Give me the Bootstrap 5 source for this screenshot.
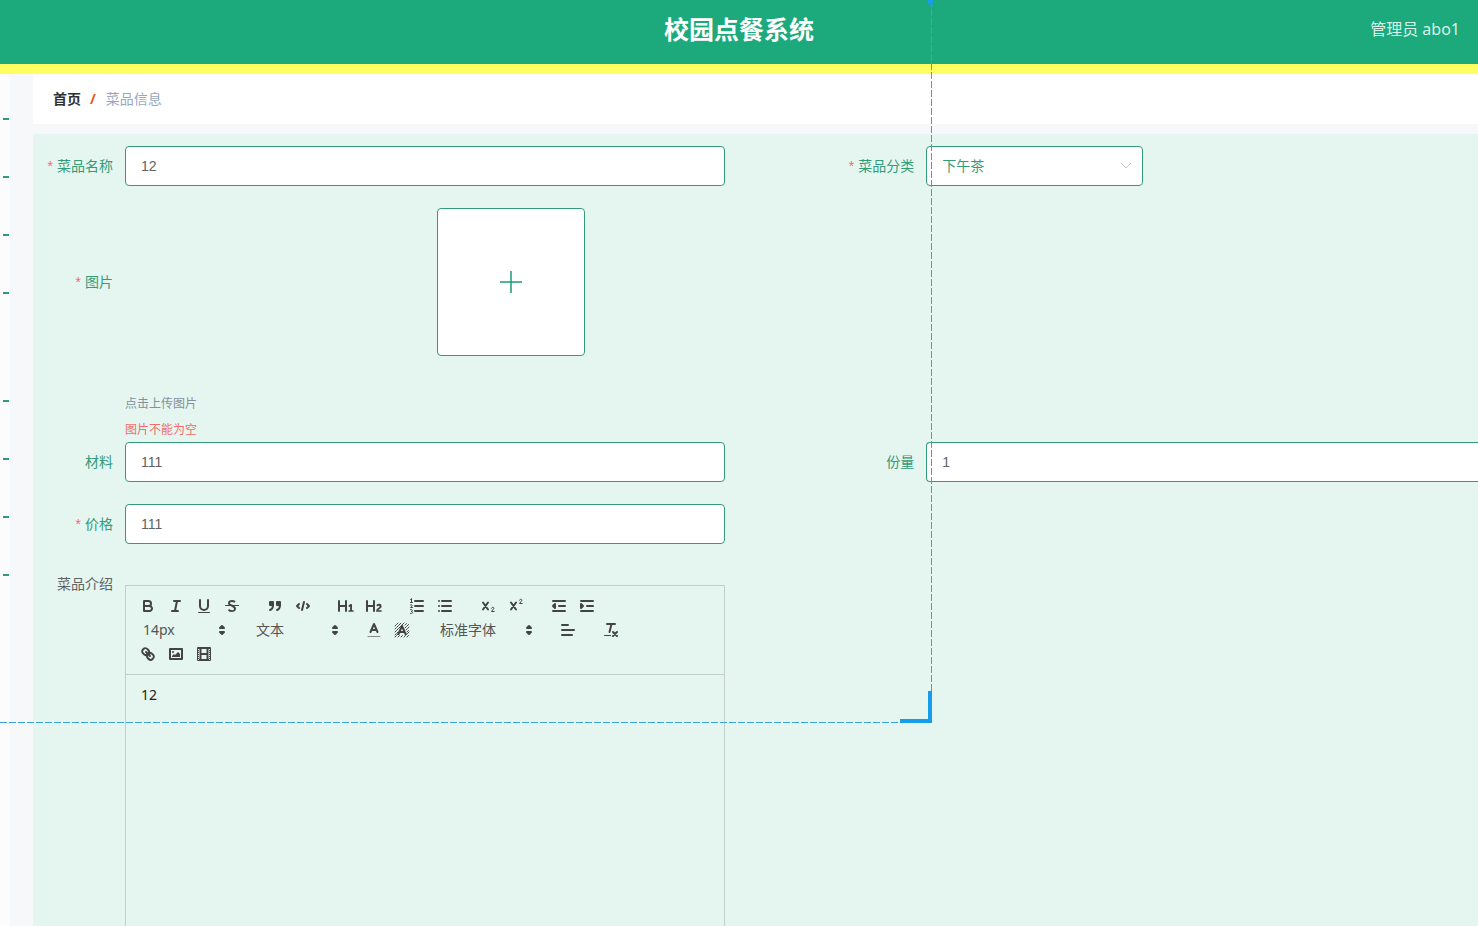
<!DOCTYPE html>
<html lang="zh-CN">
<head>
<meta charset="utf-8">
<meta name="viewport" content="width=device-width, initial-scale=1">
<title>校园点餐系统</title>
<link href="https://cdn.jsdelivr.net/npm/bootstrap@5.3.0/dist/css/bootstrap.min.css" rel="stylesheet">
<style>
:root{--brand:#1ca97b;--line:#349b79;--mint:#e4f6ef;--ink:#444}
body{font:14px/20px "Noto Sans","Noto Sans CJK SC",sans-serif;color:#606266;background:#f6f8fa}
.topbar{height:74px;padding-bottom:6px;background:var(--brand);border-bottom:10px solid #ffff62}
.brand-title{font-size:25px;line-height:36px;font-weight:700;color:#fff}
.account{right:18px;top:19px;font-size:16px;color:#d9f2e9}
.rail{width:10px;background:#fcfcfc;padding-top:16px}
.rail a{display:flex;align-items:center;height:58px;padding-left:3px}
.rail a::after{content:"";width:6px;height:2px;background:var(--line)}
.rail .rail-gap{margin-top:50px}
.content-area{margin-left:23px}
.crumbs{height:50px;padding:0 20px;background:#fff;margin-bottom:10px}
.crumbs a{color:#303133;font-weight:700}
.crumbs .sep{color:#e8562b;font-weight:700;margin:0 10px 0 9px}
.crumbs .here{color:#97a8be}
.dish-form{background:var(--mint);padding-top:12px}
.form-line{display:grid;grid-template-columns:minmax(0,56fr) minmax(0,45fr);margin-bottom:22px}
.tag{flex:0 0 92px;padding-right:12px;text-align:right;line-height:40px;color:var(--line)}
.tag.need::before{content:"*";font-family:"Liberation Sans",sans-serif;color:#f56c6c;margin-right:4px}
.tag-plain{line-height:36px;color:#606266}
.box{height:40px;border:1px solid var(--line);border-radius:4px;padding:0 15px;font-family:"Liberation Sans","Noto Sans CJK SC",sans-serif;font-size:14px;color:#606266;background-color:#fff}
.box-wide{flex:1 1 0;max-width:600px;min-width:0}
.box-cut{flex:1 1 0;min-width:0;border-right:0;border-radius:4px 0 0 4px}
.box-pick{width:217px;appearance:none;color:var(--line);background:#fff url("data:image/svg+xml,%3Csvg xmlns='http://www.w3.org/2000/svg' width='12' height='8' fill='none' stroke='%23c0c4cc'%3E%3Cpath d='M1 1l5 5 5-5'/%3E%3C/svg%3E") no-repeat right 10px center}
.upload-line{margin-bottom:34px}
.upload{width:148px;height:148px;margin-left:312px;border:1px solid var(--line);border-radius:4px;background:#fff}
.hint{font-size:12px;margin-left:92px}
.hint .tip{color:#838fa0;line-height:28px}
.hint .err{color:#f56c6c;line-height:24px}
.editor{flex:1 1 0;max-width:600px;margin-top:19px;border:1px solid #c0cfca}
.tools{padding:8px;border-bottom:1px solid #c0cfca}
.tools .set{display:flex;margin-right:15px}
.tools button{width:28px;height:24px;padding:3px 5px;border:0;background:none;display:block}
.tools svg{display:block;width:18px;height:18px;fill:none;stroke:var(--ink);stroke-width:2;stroke-linecap:round;stroke-linejoin:round}
.tools .f{fill:var(--ink);stroke:none}
.tools .s{fill:var(--ink)}
.tools .t{stroke-width:1}
.tools select{width:98px;height:24px;padding:0 18px 0 9px;border:0;appearance:none;font-size:14px;line-height:20px;color:#555;background:url("data:image/svg+xml,%3Csvg xmlns='http://www.w3.org/2000/svg' viewBox='0 0 18 18' width='18' height='18' fill='%23444' stroke='%23444' stroke-width='2' stroke-linejoin='round'%3E%3Cpath d='M7 11l2 2 2-2zM7 7l2-2 2 2z'/%3E%3C/svg%3E") no-repeat right 1px center}
.tools .fontpick{width:108px}
.entry{display:block;width:100%;height:500px;border:0;padding:10px 15px;background:transparent;color:#222;font-size:14px;line-height:20px;resize:none}
.capture{left:0;top:0;width:932px;height:723px;pointer-events:none;z-index:5;
background:repeating-linear-gradient(to bottom,#35a5dc 0 7px,transparent 7px 9px) right top/1px 100% no-repeat,repeating-linear-gradient(to right,#35a5dc 0 7px,transparent 7px 9px) left bottom/100% 1px no-repeat}
.capture::before{content:"";position:absolute;right:0;bottom:0;width:32px;height:32px;border:solid #159ceb;border-width:0 4px 4px 0}
.capture::after{content:"";position:absolute;right:-1px;top:0;width:5px;height:5px;background:#159ceb;border-radius:0 0 3px 3px}
</style>
</head>
<body>
<div class="vh-100 d-flex flex-column overflow-hidden position-relative">
<header class="topbar d-flex align-items-center justify-content-center position-relative flex-shrink-0">
<h1 class="brand-title m-0">校园点餐系统</h1>
<span class="account position-absolute">管理员 abo1</span>
</header>
<div class="d-flex flex-grow-1 overflow-hidden">
<nav class="rail flex-shrink-0" aria-label="菜单">
<a href="#"></a><a href="#"></a><a href="#"></a><a href="#"></a><a href="#" class="rail-gap"></a><a href="#"></a><a href="#"></a><a href="#"></a>
</nav>
<main class="content-area flex-grow-1">
<nav class="crumbs d-flex align-items-center"><a href="#" class="text-decoration-none">首页</a><span class="sep">/</span><span class="here">菜品信息</span></nav>
<form class="dish-form">
<div class="form-line">
<div class="d-flex"><label class="tag need" for="name">菜品名称</label><input class="box box-wide" id="name" value="12"></div>
<div class="d-flex"><label class="tag need" for="kind">菜品分类</label><select class="box box-pick" id="kind"><option>下午茶</option></select></div>
</div>
<div class="upload-line d-flex align-items-center"><span class="tag need">图片</span>
<button type="button" class="upload d-flex align-items-center justify-content-center p-0" aria-label="上传"><svg width="24" height="24" stroke="#1c9c75" stroke-width="1.5"><path d="M1 12h22M12 1v22"/></svg></button></div>
<div class="hint"><div class="tip">点击上传图片</div><div class="err">图片不能为空</div></div>
<div class="form-line">
<div class="d-flex"><label class="tag" for="stuff">材料</label><input class="box box-wide" id="stuff" value="111"></div>
<div class="d-flex"><label class="tag" for="amount">份量</label><input class="box box-cut" id="amount" value="1"></div>
</div>
<div class="form-line">
<div class="d-flex"><label class="tag need" for="price">价格</label><input class="box box-wide" id="price" value="111"></div>
</div>
<div class="d-flex"><label class="tag tag-plain" for="intro">菜品介绍</label>
<div class="editor">
<div class="tools d-flex flex-wrap">
<div class="set">
<button type="button" aria-label="粗体"><svg viewBox="0 0 18 18"><path d="M5,4H9.5A2.5,2.5,0,0,1,12,6.5v0A2.5,2.5,0,0,1,9.5,9H5A0,0,0,0,1,5,9V4Z"/><path d="M5,9h5.5A2.5,2.5,0,0,1,13,11.5v0A2.5,2.5,0,0,1,10.500,14H5V9Z"/></svg></button>
<button type="button" aria-label="斜体"><svg viewBox="0 0 18 18"><path d="M7 4h6M5 14h6M8 14l2-10"/></svg></button>
<button type="button" aria-label="下划线"><svg viewBox="0 0 18 18"><path d="M5,3V9a4.012,4.012,0,0,0,4,4H9a4.012,4.012,0,0,0,4-4V3"/><rect class="f" height="1" rx=".5" width="12" x="3" y="15"/></svg></button>
<button type="button" aria-label="删除线"><svg viewBox="0 0 18 18"><path class="t" d="M2.500 8.500h13"/><path class="f" d="M6.753,8.663A2.800,2.800,0,0,1,5,6C5,4.200,6.600,3,9,3a5.900,5.900,0,0,1,3.500,1.100L11.600,5.700A4.500,4.500,0,0,0,9,4.900c-1.300,0-2,.5-2,1.200,0,.8.700,1.300,3.400,1.900z"/><path class="f" d="M11.500,9A3,3,0,0,1,13,11.800C13,13.700,11.400,15,8.900,15A6.300,6.300,0,0,1,5,13.700l.9-1.600A5,5,0,0,0,8.900,13.200c1.300,0,2.100-.5,2.100-1.300C11,11,10.300,10.400,7.500,9z"/></svg></button>
</div>
<div class="set">
<button type="button" aria-label="引用"><svg viewBox="0 0 18 18"><rect class="s" height="3" width="3" x="4" y="5"/><rect class="s" height="3" width="3" x="11" y="5"/><path d="M7,8c0,4.031-3,5-3,5"/><path d="M14,8c0,4.031-3,5-3,5"/></svg></button>
<button type="button" aria-label="代码"><svg viewBox="0 0 18 18"><path d="M5 7L3 9l2 2M13 7l2 2-2 2M10 5L8 13"/></svg></button>
</div>
<div class="set">
<button type="button" aria-label="标题一"><svg viewBox="0 0 18 18"><path class="f" d="M10,4V14a1,1,0,0,1-2,0V10H3v4a1,1,0,0,1-2,0V4A1,1,0,0,1,3,4V8H8V4a1,1,0,0,1,2,0Zm6.06787,9.209H14.98975V7.59863a.54085.54085,0,0,0-.605-.60547h-.62744a1.01119,1.01119,0,0,0-.748.29688L11.645,8.56641a.5435.5435,0,0,0-.022.8584l.28613.30762a.53861.53861,0,0,0,.84717.0332l.09912-.08789a1.2137,1.2137,0,0,0,.2417-.35254h.02246s-.01123.30859-.01123.60547V13.209H12.041a.54085.54085,0,0,0-.605.60547v.43945a.54085.54085,0,0,0,.605.60547h4.02686a.54085.54085,0,0,0,.605-.60547v-.43945A.54085.54085,0,0,0,16.06787,13.209Z"/></svg></button>
<button type="button" aria-label="标题二"><svg viewBox="0 0 18 18"><path class="f" d="M16.73975,13.81445v.43945a.54085.54085,0,0,1-.605.60547H11.855a.58392.58392,0,0,1-.64893-.60547V14.0127c0-2.90527,3.39941-3.42187,3.39941-4.55469a.77675.77675,0,0,0-.84717-.78125,1.17684,1.17684,0,0,0-.83594.38477c-.2749.26367-.561.374-.85791.13184l-.4292-.34082c-.30811-.24219-.38525-.51758-.1543-.81445a2.97155,2.97155,0,0,1,2.45361-1.17676,2.45393,2.45393,0,0,1,2.68408,2.40918c0,2.45312-3.1792,2.92676-3.27832,3.93848h2.79443A.54085.54085,0,0,1,16.73975,13.81445ZM9,3A.99974.99974,0,0,0,8,4V8H3V4A1,1,0,0,0,1,4V14a1,1,0,0,0,2,0V10H8v4a1,1,0,0,0,2,0V4A.99974.99974,0,0,0,9,3Z"/></svg></button>
</div>
<div class="set">
<button type="button" aria-label="有序列表"><svg viewBox="0 0 18 18"><path d="M7 4h8M7 9h8M7 14h8"/><path class="t" d="M2.500 5.500h2M3.500 5.500v-4l-1 1M2.500 8c2-1 2.500.5 0 2.500h2M2.500 12.500c2.500-.5 2.500 2 .5 2 2.500 0 2 2.500-.5 2"/></svg></button>
<button type="button" aria-label="无序列表"><svg viewBox="0 0 18 18"><path d="M6 4h9M6 9h9M6 14h9M3 4h0M3 9h0M3 14h0"/></svg></button>
</div>
<div class="set">
<button type="button" aria-label="下标"><svg viewBox="0 0 18 18"><path d="M4 5.500l5 7M9 5.500l-5 7"/><path class="t" d="M12.500 11.200c.5-1.700 3-1 2.200.5L12.500 14.500h2.700"/></svg></button>
<button type="button" aria-label="上标"><svg viewBox="0 0 18 18"><path d="M4 5.500l5 7M9 5.500l-5 7"/><path class="t" d="M12.500 3.200c.5-1.700 3-1 2.200.5L12.500 6.500h2.700"/></svg></button>
</div>
<div class="set">
<button type="button" aria-label="减少缩进"><svg viewBox="0 0 18 18"><path d="M3 14h12M3 4h12M9 9h6"/><path class="s" d="M5 7v4L3 9z"/></svg></button>
<button type="button" aria-label="增加缩进"><svg viewBox="0 0 18 18"><path d="M3 14h12M3 4h12M9 9h6"/><path class="s" d="M3 7v4l2-2z"/></svg></button>
</div>
<div class="set"><select aria-label="字号"><option>14px</option></select></div>
<div class="set"><select aria-label="段落"><option>文本</option></select></div>
<div class="set">
<button type="button" aria-label="文字颜色"><svg viewBox="0 0 18 18"><path class="t" opacity=".6" d="M3 15.500h12"/><path d="M5.500 11L9 3l3.500 8M6.500 9h5"/></svg></button>
<button type="button" aria-label="背景颜色"><svg viewBox="0 0 18 18"><path class="t" stroke-dasharray="2 1" d="M2 5l3-3M2 8l6-6M2 11l9-9M2 14l3-3M9 4l2-2M12 4l2-2M12 7l4-4M13 9l3-3M14 11l2-2M2 16l4-4M5 16l2-2M8 16l2-2M11 16l5-5M14 16l2-2"/><path d="M5.500 13L9 5l3.500 8M6.500 11h5"/></svg></button>
</div>
<div class="set"><select class="fontpick" aria-label="字体"><option>标准字体</option></select></div>
<div class="set"><button type="button" aria-label="对齐"><svg viewBox="0 0 18 18"><path d="M3 9h12M3 14h10M3 4h6"/></svg></button></div>
<div class="set"><button type="button" aria-label="清除格式"><svg viewBox="0 0 18 18"><path d="M5 3h8M7.500 11L9.500 3"/><path d="M11 11l4 4M15 11l-4 4"/><rect class="f" height="1" rx=".5" width="7" x="2" y="14"/></svg></button></div>
<div class="set">
<button type="button" aria-label="链接"><svg viewBox="0 0 18 18"><path d="M7 7l4 4"/><path d="M8.900,4.577a3.476,3.476,0,0,1,.36,4.679A3.476,3.476,0,0,1,4.577,8.900C3.185,7.500,2.035,6.400,4.217,4.217S7.500,3.185,8.900,4.577Z"/><path d="M13.423,9.100a3.476,3.476,0,0,0-4.679-.36,3.476,3.476,0,0,0,.36,4.679c1.392,1.392,2.500,2.542,4.679.36S14.815,10.500,13.423,9.100Z"/></svg></button>
<button type="button" aria-label="图片"><svg viewBox="0 0 18 18"><rect height="10" width="12" x="3" y="4"/><circle class="f" cx="6" cy="7" r="1"/><path class="f" d="M5 12V11L7 9 8 10 11 7 13 9V12z"/></svg></button>
<button type="button" aria-label="视频"><svg viewBox="0 0 18 18"><rect height="12" width="12" x="3" y="3"/><path d="M5.500 3v12M12.500 3v12M6 9h6"/><path stroke="#e4f6ef" class="t" style="stroke:#e4f6ef" stroke-linecap="butt" stroke-dasharray="1 1" d="M3.500 4v11M14.500 4v11"/></svg></button>
</div>
</div>
<textarea class="entry" id="intro">12</textarea>
</div></div>
</form>
</main>
</div>
<div class="capture position-absolute"></div>
</div>
<script src="https://cdn.jsdelivr.net/npm/bootstrap@5.3.0/dist/js/bootstrap.bundle.min.js"></script>
</body>
</html>
